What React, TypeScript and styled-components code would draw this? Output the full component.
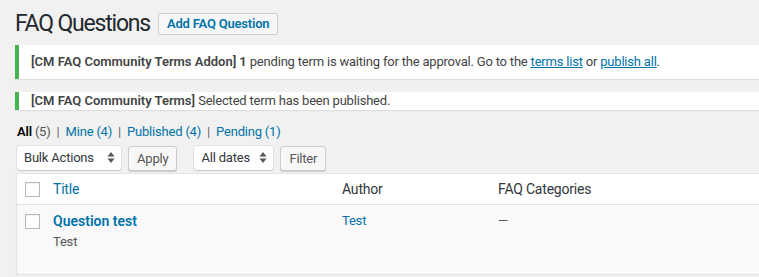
import styled, { createGlobalStyle } from 'styled-components';

const GlobalStyle = createGlobalStyle`
  html, body {
    margin: 0;
    padding: 0;
    background: #f1f1f1;
    overflow: hidden;
  }
  body {
    font-family: Roboto, "Liberation Sans", sans-serif;
    font-size: 13px;
    letter-spacing: -0.2px;
    color: #444;
    -webkit-font-smoothing: antialiased;
  }
`;

const Wrap = styled.div`
  width: 1000px;
  padding: 9px 0 0 15px;
`;

const HeadingRow = styled.div`
  display: flex;
  align-items: center;
  gap: 8px;
`;

const Heading = styled.h1`
  margin: 0;
  font-size: 23px;
  font-weight: 400;
  line-height: 29px;
  letter-spacing: -1.2px;
  color: #23282d;
`;

const PageTitleAction = styled.a`
  display: inline-block;
  padding: 3px 8px 4px;
  border: 1px solid #ccc;
  border-radius: 2px;
  background: #f7f7f7;
  color: #0073aa;
  font-size: 13px;
  font-weight: 600;
  line-height: 13px;
  letter-spacing: -0.2px;
  text-decoration: none;
`;

const Notice = styled.div<{ $slim?: boolean }>`
  margin-top: ${(p) => (p.$slim ? '13px' : '7px')};
  background: #fff;
  border-left: 4px solid #46b450;
  box-shadow: 0 1px 1px rgba(0, 0, 0, 0.08);
  padding: ${(p) => (p.$slim ? '0 12px' : '7px 12px 8px')};
  line-height: ${(p) => (p.$slim ? '18px' : '19px')};
  color: #444;
`;

const Strong = styled.strong`
  font-weight: 600;
  letter-spacing: 0;
`;

const Link = styled.a`
  color: #0073aa;
  text-decoration: underline;
`;

const Filters = styled.ul`
  list-style: none;
  display: flex;
  margin: 15px 0 0 2px;
  padding: 0;
  line-height: 14px;
  color: #666;
`;

const FilterItem = styled.li`
  & + &::before {
    content: '|';
    color: #666;
    margin: 0 6px;
  }
`;

const FilterLink = styled.a<{ $current?: boolean }>`
  color: ${(p) => (p.$current ? '#000' : '#0073aa')};
  font-weight: ${(p) => (p.$current ? 600 : 400)};
  text-decoration: none;
`;

const Count = styled.span<{ $current?: boolean }>`
  color: ${(p) => (p.$current ? '#555' : '#0073aa')};
`;

const Tablenav = styled.div`
  display: flex;
  align-items: center;
  margin: 7px 0 0 2px;
  height: 24px;
`;

const Group = styled.div`
  display: flex;
  gap: 7px;
  margin-right: 17px;
`;

const Select = styled.div<{ $w: number }>`
  box-sizing: border-box;
  width: ${(p) => p.$w}px;
  height: 24px;
  display: flex;
  align-items: center;
  justify-content: space-between;
  padding: 0 6px 0 7px;
  background: #fff;
  border-radius: 3px;
  box-shadow: 0 0 0 1px rgba(0, 0, 0, 0.06), 0 1px 1px rgba(0, 0, 0, 0.12);
  color: #32373c;
  font-size: 13px;
`;

const Button = styled.div`
  box-sizing: border-box;
  height: 25px;
  display: flex;
  align-items: center;
  padding: 0 8px;
  background: #f7f7f7;
  border: 1px solid #ccc;
  border-radius: 3px;
  box-shadow: 0 1px 0 #ccc;
  color: #555;
  font-size: 13px;
`;

const Table = styled.div`
  margin: 3px 0 0 1px;
  background: #fff;
  border: 1px solid #e5e5e5;
  box-shadow: 0 1px 1px rgba(0, 0, 0, 0.04);
`;

const Row = styled.div<{ $head?: boolean }>`
  display: grid;
  grid-template-columns: 36px 289px 156px 1fr;
  background: ${(p) => (p.$head ? '#fff' : '#f9f9f9')};
  border-bottom: ${(p) => (p.$head ? '1px solid #e1e1e1' : 'none')};
  height: ${(p) => (p.$head ? '30px' : '69px')};
`;

const CheckCell = styled.div<{ $head?: boolean }>`
  padding: ${(p) => (p.$head ? '8px 0 0 8px' : '9px 0 0 8px')};
`;

const Checkbox = styled.span`
  display: block;
  box-sizing: border-box;
  width: 15px;
  height: 15px;
  border: 1px solid #b4b9be;
  background: #fff;
  box-shadow: inset 0 1px 2px rgba(0, 0, 0, 0.07);
`;

const Cell = styled.div<{ $head?: boolean }>`
  padding: ${(p) => (p.$head ? '7px 0 0 0' : '8px 0 0 0')};
  color: ${(p) => (p.$head ? '#32373c' : '#555')};
  font-size: ${(p) => (p.$head ? '14px' : '13px')};
  line-height: ${(p) => (p.$head ? '17px' : '16px')};
`;

const HeadLink = styled.a`
  color: #0073aa;
  text-decoration: none;
`;

const RowTitle = styled.a`
  display: block;
  color: #0073aa;
  font-size: 14px;
  font-weight: 600;
  letter-spacing: 0;
  text-decoration: none;
  line-height: 17px;
`;

const Sub = styled.div`
  margin-top: 4px;
  color: #555;
  font-size: 13px;
`;

const CellLink = styled.a`
  color: #0073aa;
  text-decoration: none;
`;

function SortArrows() {
  return (
    <svg width="8" height="13" viewBox="0 0 8 13">
      <path d="M4 1 L7.5 5.5 H0.5 Z" fill="#555" />
      <path d="M4 12 L7.5 7.5 H0.5 Z" fill="#555" />
    </svg>
  );
}

export default function App() {
  return (
    <>
      <GlobalStyle />
      <Wrap>
        <HeadingRow>
          <Heading>FAQ Questions</Heading>
          <PageTitleAction>Add FAQ Question</PageTitleAction>
        </HeadingRow>

        <Notice>
          <Strong>[CM FAQ Community Terms Addon]</Strong> <Strong>1</Strong> pending term is waiting
          for the approval. Go to the <Link>terms list</Link> or <Link>publish all</Link>.
        </Notice>

        <Notice $slim>
          <Strong>[CM FAQ Community Terms]</Strong> Selected term has been published.
        </Notice>

        <Filters>
          <FilterItem>
            <FilterLink $current>All</FilterLink> <Count $current>(5)</Count>
          </FilterItem>
          <FilterItem>
            <FilterLink>Mine</FilterLink> <Count>(4)</Count>
          </FilterItem>
          <FilterItem>
            <FilterLink>Published</FilterLink> <Count>(4)</Count>
          </FilterItem>
          <FilterItem>
            <FilterLink>Pending</FilterLink> <Count>(1)</Count>
          </FilterItem>
        </Filters>

        <Tablenav>
          <Group>
            <Select $w={104}>
              Bulk Actions <SortArrows />
            </Select>
            <Button>Apply</Button>
          </Group>
          <Group>
            <Select $w={79}>
              All dates <SortArrows />
            </Select>
            <Button>Filter</Button>
          </Group>
        </Tablenav>

        <Table>
          <Row $head>
            <CheckCell $head>
              <Checkbox />
            </CheckCell>
            <Cell $head>
              <HeadLink>Title</HeadLink>
            </Cell>
            <Cell $head>Author</Cell>
            <Cell $head>FAQ Categories</Cell>
          </Row>
          <Row>
            <CheckCell>
              <Checkbox />
            </CheckCell>
            <Cell>
              <RowTitle>Question test</RowTitle>
              <Sub>Test</Sub>
            </Cell>
            <Cell>
              <CellLink>Test</CellLink>
            </Cell>
            <Cell>—</Cell>
          </Row>
        </Table>
      </Wrap>
    </>
  );
}
